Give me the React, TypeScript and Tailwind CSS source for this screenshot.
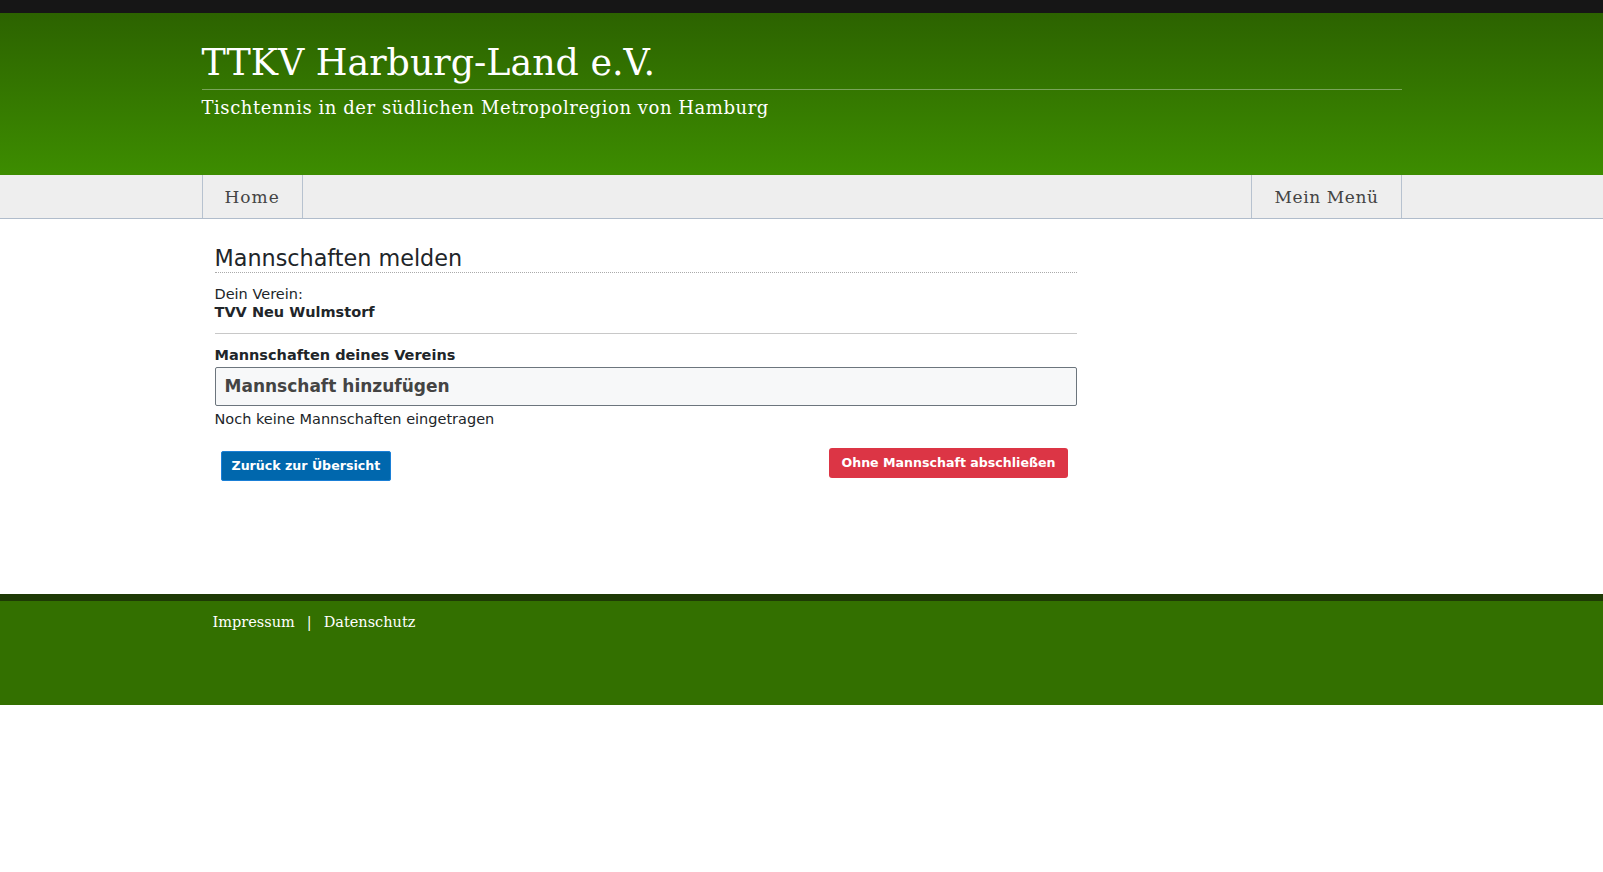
export default function App() {
  const serif = "font-['DejaVu_Serif',serif]"
  return (
    <div className="min-h-[872px] bg-white font-['DejaVu_Sans',sans-serif] text-[#212529]">
      <div className="h-[13px] bg-[#161616]" />
      <header className="h-[162px] bg-gradient-to-b from-[#2c6300] to-[#3d8d00]">
        <div className="mx-auto w-[1200px] pt-[27px]">
          <h1 className={`${serif} text-[36.4px] leading-[46px] text-white pb-[3px] border-b border-[#7aa45a]`}>
            TTKV Harburg-Land e.V.
          </h1>
          <p className={`${serif} mt-[4px] text-[18px] tracking-[0.55px] text-white`}>
            Tischtennis in der südlichen Metropolregion von Hamburg
          </p>
        </div>
      </header>
      <nav className="h-[44px] bg-[#eeeeee] border-b border-[#b0bccb]">
        <div className={`${serif} mx-auto w-[1200px] h-full flex justify-between text-[17px] text-[#444]`}>
          <a className="h-full flex items-center pt-[3px] px-[22px] tracking-[1px] border-x border-[#b7c2cf]">Home</a>
          <a className="h-full flex items-center pt-[3px] px-[22px] tracking-[0.6px] border-x border-[#b7c2cf]">Mein Menü</a>
        </div>
      </nav>
      <main className="mx-auto w-[1200px] pl-[13px] pt-[26px] h-[375px]">
        <div className="w-[862px]">
          <h2 className="text-[22.3px] leading-[26px] pb-[1px] border-b border-dotted border-[#aaa]">Mannschaften melden</h2>
          <div className="mt-[12px] text-[14.5px] leading-[18px]">
            <div>Dein Verein:</div>
            <div className="font-bold">TVV Neu Wulmstorf</div>
          </div>
          <hr className="mt-[12px] border-[#c8c8c8]" />
          <div className="mt-[12px] text-[14.5px] font-bold leading-[18px]">Mannschaften deines Vereins</div>
          <div className="mt-[3px] h-[39px] flex items-center px-[9px] bg-[#f7f8f9] border border-[#6c757d] rounded-[2px] text-[17px] font-bold text-[#444]">
            Mannschaft hinzufügen
          </div>
          <div className="mt-[4px] text-[14.5px] leading-[18px]">Noch keine Mannschaften eingetragen</div>
          <div className="mt-[20px] flex justify-between items-start">
            <button className="ml-[6px] mt-[3px] h-[30px] px-[10px] bg-[#0067ad] border border-[#1a7fd6] rounded-[2px] text-white text-[12.6px] font-bold">
              Zurück zur Übersicht
            </button>
            <button className="mr-[9px] h-[30px] px-[12px] bg-[#dc3545] rounded-[3px] text-white text-[12.6px] font-bold">
              Ohne Mannschaft abschließen
            </button>
          </div>
        </div>
      </main>
      <footer>
        <div className="h-[7px] bg-[#1e3a05]" />
        <div className="h-[104px] bg-[#337000]">
          <div className={`${serif} mx-auto w-[1200px] pl-[11px] pt-[11px] text-[14.5px] text-white flex gap-[12px]`}>
            <a>Impressum</a>
            <span>|</span>
            <a>Datenschutz</a>
          </div>
        </div>
      </footer>
    </div>
  )
}
